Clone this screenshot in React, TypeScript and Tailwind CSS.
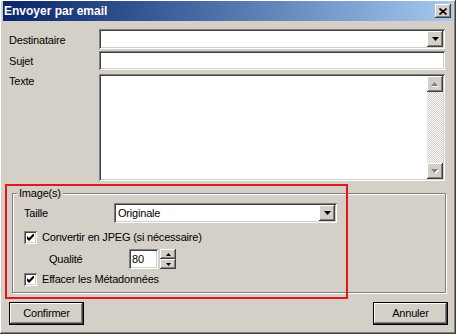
import React from "react";

const font = { fontFamily: '"Liberation Sans", Arial, sans-serif' };

const raised =
  "bg-[#d4d0c8] shadow-[inset_-1px_-1px_#404040,inset_1px_1px_#fff,inset_-2px_-2px_#808080,inset_2px_2px_#d4d0c8]";
const sunken =
  "bg-white shadow-[inset_1px_1px_#808080,inset_-1px_-1px_#fff,inset_2px_2px_#404040,inset_-2px_-2px_#d4d0c8]";

function Arrow({ dir = "down", color = "#000" }: { dir?: "up" | "down"; color?: string }) {
  return (
    <svg width="7" height="4" viewBox="0 0 7 4">
      {dir === "down" ? (
        <path d="M0 0h7L3.5 4z" fill={color} />
      ) : (
        <path d="M0 4h7L3.5 0z" fill={color} />
      )}
    </svg>
  );
}

function ScrollBtn({ dir }: { dir: "up" | "down" }) {
  return (
    <div className={`w-[16px] h-[16px] flex items-center justify-center ${raised}`}>
      <svg width="8" height="5" viewBox="0 0 8 5">
        {dir === "up" ? (
          <>
            <path d="M1 5h7L4.5 1z" fill="#fff" />
            <path d="M0 4h7L3.5 0z" fill="#808080" />
          </>
        ) : (
          <>
            <path d="M1 1h7L4.5 5z" fill="#fff" />
            <path d="M0 0h7L3.5 4z" fill="#808080" />
          </>
        )}
      </svg>
    </div>
  );
}

function DropBtn() {
  return (
    <div className={`w-[16px] h-[16px] flex items-center justify-center ${raised}`}>
      <Arrow />
    </div>
  );
}

function Check() {
  return (
    <div className={`w-[13px] h-[13px] flex items-center justify-center ${sunken}`}>
      <svg width="7" height="7" viewBox="0 0 7 7">
        <path d="M0 2v3l2 2 5-5V-1L2 4z" fill="#000" />
      </svg>
    </div>
  );
}

function Button({ label }: { label: string }) {
  return (
    <div className="w-[75px] h-[23px] border border-black">
      <div className={`w-full h-full flex items-center justify-center text-[11px] ${raised}`}>
        {label}
      </div>
    </div>
  );
}

export default function App() {
  return (
    <div
      style={font}
      className="w-[456px] h-[334px] bg-[#d4d0c8] relative text-black text-[11px] tracking-[-0.2px] shadow-[inset_-1px_-1px_#404040,inset_1px_1px_#fff,inset_-2px_-2px_#808080,inset_2px_2px_#d4d0c8] overflow-hidden"
    >
      {/* title bar */}
      <div className="mx-[3px] mt-[1px] h-[20px] flex items-center justify-between bg-gradient-to-r from-[#0a246a] to-[#a6caf0] pl-[1px] pr-[2px]">
        <span className="text-white font-bold text-[12px] tracking-normal leading-none">Envoyer par email</span>
        <div className={`w-[16px] h-[14px] flex items-center justify-center ${raised}`}>
          <svg width="8" height="7" viewBox="0 0 8 7">
            <path d="M0.5 0.5l7 6M7.5 0.5l-7 6" stroke="#000" strokeWidth="1.6" />
          </svg>
        </div>
      </div>

      {/* fields */}
      <div className="pl-[9px] mt-[8px] flex flex-col">
        <div className="flex items-center h-[20px]">
          <span className="w-[90px] pt-[2px]">Destinataire</span>
          <div className={`w-[346px] h-[20px] flex items-center justify-end pr-[2px] ${sunken}`}>
            <DropBtn />
          </div>
        </div>
        <div className="flex items-center h-[19px] mt-[2px]">
          <span className="w-[90px] pt-[2px]">Sujet</span>
          <div className={`w-[346px] h-[19px] ${sunken}`} />
        </div>
        <div className="flex items-start h-[107px] mt-[4px]">
          <span className="w-[90px] leading-[13px] pt-[1px]">Texte</span>
          <div className={`w-[346px] h-[107px] flex justify-end p-[2px] ${sunken}`}>
            <div className="w-[16px] h-full flex flex-col bg-[repeating-conic-gradient(#fff_0%_25%,#d4d0c8_0%_50%)] bg-[length:2px_2px]">
              <ScrollBtn dir="up" />
              <div className="flex-1" />
              <ScrollBtn dir="down" />
            </div>
          </div>
        </div>
      </div>

      {/* group box */}
      <div className="ml-[12px] mt-[12px] w-[434px] h-[100px] border border-[#808080] shadow-[inset_1px_1px_#fff,1px_1px_#fff] flex flex-col">
        <span className="self-start ml-[4px] px-[2px] -mt-[7px] h-[13px] leading-[13px] bg-[#d4d0c8]">
          Image(s)
        </span>
        <div className="flex items-center h-[20px] mt-[3px] pl-[11px]">
          <span className="w-[90px]">Taille</span>
          <div className={`w-[223px] h-[20px] flex items-center justify-between pl-[4px] pr-[2px] ${sunken}`}>
            <span>Originale</span>
            <DropBtn />
          </div>
        </div>
        <div className="flex items-center h-[13px] mt-[8px] pl-[11px]">
          <Check />
          <span className="ml-[5px]">Convertir en JPEG (si nécessaire)</span>
        </div>
        <div className="flex items-center h-[20px] mt-[5px] pl-[36px]">
          <span className="w-[80px]">Qualité</span>
          <div className={`w-[29px] h-[20px] flex items-center pl-[3px] ${sunken}`}>80</div>
          <div className="ml-[2px] w-[16px] h-[20px] flex flex-col">
            <div className={`h-[10px] flex items-center justify-center ${raised}`}>
              <svg width="5" height="3" viewBox="0 0 5 3">
                <path d="M0 3h5L2.5 0z" fill="#000" />
              </svg>
            </div>
            <div className={`h-[10px] flex items-center justify-center ${raised}`}>
              <svg width="5" height="3" viewBox="0 0 5 3">
                <path d="M0 0h5L2.5 3z" fill="#000" />
              </svg>
            </div>
          </div>
        </div>
        <div className="flex items-center h-[13px] mt-[4px] pl-[11px]">
          <Check />
          <span className="ml-[5px]">Effacer les Métadonnées</span>
        </div>
      </div>

      {/* buttons */}
      <div className="flex justify-between pl-[9px] pr-[8px] mt-[9px]">
        <Button label="Confirmer" />
        <Button label="Annuler" />
      </div>

      {/* red highlight annotation */}
      <div className="absolute left-[5px] top-[184px] w-[343px] h-[115px] border-2 border-[#e3161e] pointer-events-none" />
    </div>
  );
}
